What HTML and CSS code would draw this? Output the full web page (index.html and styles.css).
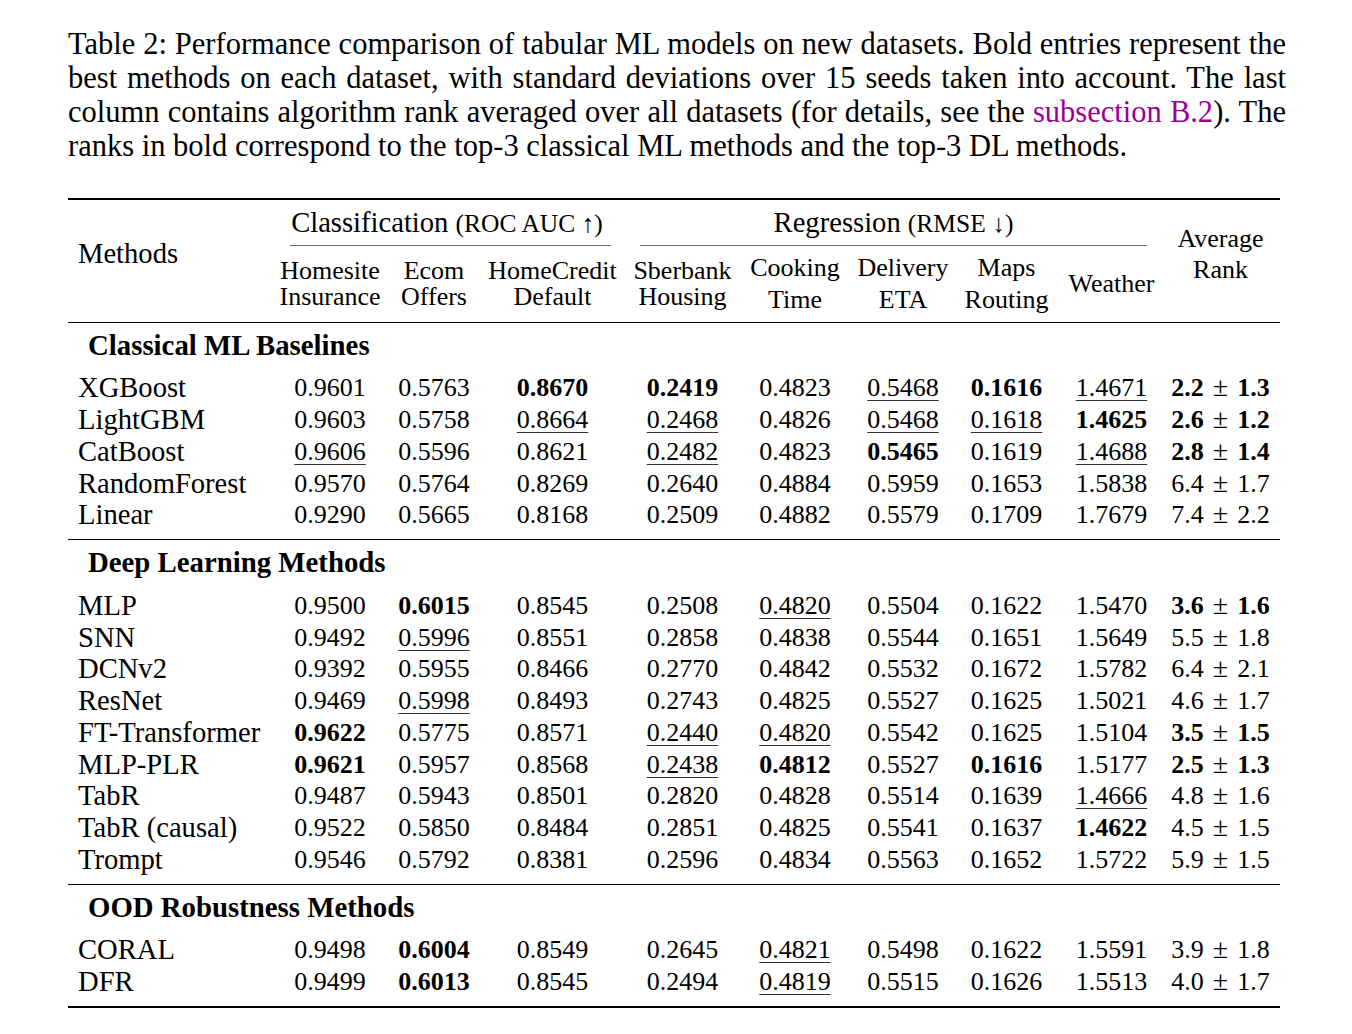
FILE: index.html
```html
<!DOCTYPE html>
<html lang="en">
<head>
<meta charset="utf-8">
<title>Table 2</title>
<link rel="stylesheet" href="styles.css">
</head>
<body>
<div class="page">
  <p class="caption">
    <span class="ln">Table 2: Performance comparison of tabular ML models on new datasets. Bold entries represent the</span>
    <span class="ln">best methods on each dataset, with standard deviations over 15 seeds taken into account. The last</span>
    <span class="ln">column contains algorithm rank averaged over all datasets (for details, see the <span class="link">subsection B.2</span>). The</span>
    <span class="ln last">ranks in bold correspond to the top-3 classical ML methods and the top-3 DL methods.</span>
  </p>
  <table class="results">
    <colgroup>
      <col class="c-m"><col class="c1"><col class="c2"><col class="c3"><col class="c4"><col class="c5"><col class="c6"><col class="c7"><col class="c8"><col class="c9">
    </colgroup>
    <thead>
      <tr class="h1">
        <th rowspan="2" class="methods">Methods</th>
        <th colspan="3" class="grp"><div class="cm cm-cls">Classification <span class="small">(ROC AUC ↑)</span></div></th>
        <th colspan="5" class="grp"><div class="cm cm-reg">Regression <span class="small">(RMSE ↓)</span></div></th>
        <th rowspan="2" class="avg">Average<br>Rank</th>
      </tr>
      <tr class="h2">
        <th class="sub">Homesite<br>Insurance</th>
        <th class="sub k2">Ecom<br>Offers</th>
        <th class="sub">HomeCredit<br>Default</th>
        <th class="sub">Sberbank<br>Housing</th>
        <th class="sub wide k5">Cooking<br>Time</th>
        <th class="sub wide k6">Delivery<br>ETA</th>
        <th class="sub wide">Maps<br>Routing</th>
        <th class="sub">Weather</th>
      </tr>
    </thead>
    <tbody>
      <tr class="sec"><td colspan="10">Classical ML Baselines</td></tr>
      <tr><td>XGBoost</td><td>0.9601</td><td>0.5763</td><td><b>0.8670</b></td><td><b>0.2419</b></td><td>0.4823</td><td><u>0.5468</u></td><td><b>0.1616</b></td><td><u>1.4671</u></td><td><b>2.2</b><span class="pm">±</span><b>1.3</b></td></tr>
      <tr><td>LightGBM</td><td>0.9603</td><td>0.5758</td><td><u>0.8664</u></td><td><u>0.2468</u></td><td>0.4826</td><td><u>0.5468</u></td><td><u>0.1618</u></td><td><b>1.4625</b></td><td><b>2.6</b><span class="pm">±</span><b>1.2</b></td></tr>
      <tr><td>CatBoost</td><td><u>0.9606</u></td><td>0.5596</td><td>0.8621</td><td><u>0.2482</u></td><td>0.4823</td><td><b>0.5465</b></td><td>0.1619</td><td><u>1.4688</u></td><td><b>2.8</b><span class="pm">±</span><b>1.4</b></td></tr>
      <tr><td>RandomForest</td><td>0.9570</td><td>0.5764</td><td>0.8269</td><td>0.2640</td><td>0.4884</td><td>0.5959</td><td>0.1653</td><td>1.5838</td><td>6.4<span class="pm">±</span>1.7</td></tr>
      <tr class="last"><td>Linear</td><td>0.9290</td><td>0.5665</td><td>0.8168</td><td>0.2509</td><td>0.4882</td><td>0.5579</td><td>0.1709</td><td>1.7679</td><td>7.4<span class="pm">±</span>2.2</td></tr>

      <tr class="sec"><td colspan="10">Deep Learning Methods</td></tr>
      <tr><td>MLP</td><td>0.9500</td><td><b>0.6015</b></td><td>0.8545</td><td>0.2508</td><td><u>0.4820</u></td><td>0.5504</td><td>0.1622</td><td>1.5470</td><td><b>3.6</b><span class="pm">±</span><b>1.6</b></td></tr>
      <tr><td>SNN</td><td>0.9492</td><td><u>0.5996</u></td><td>0.8551</td><td>0.2858</td><td>0.4838</td><td>0.5544</td><td>0.1651</td><td>1.5649</td><td>5.5<span class="pm">±</span>1.8</td></tr>
      <tr><td>DCNv2</td><td>0.9392</td><td>0.5955</td><td>0.8466</td><td>0.2770</td><td>0.4842</td><td>0.5532</td><td>0.1672</td><td>1.5782</td><td>6.4<span class="pm">±</span>2.1</td></tr>
      <tr><td>ResNet</td><td>0.9469</td><td><u>0.5998</u></td><td>0.8493</td><td>0.2743</td><td>0.4825</td><td>0.5527</td><td>0.1625</td><td>1.5021</td><td>4.6<span class="pm">±</span>1.7</td></tr>
      <tr><td>FT-Transformer</td><td><b>0.9622</b></td><td>0.5775</td><td>0.8571</td><td><u>0.2440</u></td><td><u>0.4820</u></td><td>0.5542</td><td>0.1625</td><td>1.5104</td><td><b>3.5</b><span class="pm">±</span><b>1.5</b></td></tr>
      <tr><td>MLP-PLR</td><td><b>0.9621</b></td><td>0.5957</td><td>0.8568</td><td><u>0.2438</u></td><td><b>0.4812</b></td><td>0.5527</td><td><b>0.1616</b></td><td>1.5177</td><td><b>2.5</b><span class="pm">±</span><b>1.3</b></td></tr>
      <tr><td>TabR</td><td>0.9487</td><td>0.5943</td><td>0.8501</td><td>0.2820</td><td>0.4828</td><td>0.5514</td><td>0.1639</td><td><u>1.4666</u></td><td>4.8<span class="pm">±</span>1.6</td></tr>
      <tr><td>TabR (causal)</td><td>0.9522</td><td>0.5850</td><td>0.8484</td><td>0.2851</td><td>0.4825</td><td>0.5541</td><td>0.1637</td><td><b>1.4622</b></td><td>4.5<span class="pm">±</span>1.5</td></tr>
      <tr class="last"><td>Trompt</td><td>0.9546</td><td>0.5792</td><td>0.8381</td><td>0.2596</td><td>0.4834</td><td>0.5563</td><td>0.1652</td><td>1.5722</td><td>5.9<span class="pm">±</span>1.5</td></tr>

      <tr class="sec"><td colspan="10">OOD Robustness Methods</td></tr>
      <tr><td>CORAL</td><td>0.9498</td><td><b>0.6004</b></td><td>0.8549</td><td>0.2645</td><td><u>0.4821</u></td><td>0.5498</td><td>0.1622</td><td>1.5591</td><td>3.9<span class="pm">±</span>1.8</td></tr>
      <tr class="last end"><td>DFR</td><td>0.9499</td><td><b>0.6013</b></td><td>0.8545</td><td>0.2494</td><td><u>0.4819</u></td><td>0.5515</td><td>0.1626</td><td>1.5513</td><td>4.0<span class="pm">±</span>1.7</td></tr>
    </tbody>
  </table>
</div>
</body>
</html>
```

FILE: styles.css
```css
html, body {
  margin: 0;
  padding: 0;
  background: #fff;
  color: #000;
  font-family: "Liberation Serif", "Times New Roman", serif;
}

.page {
  padding: 27px 0 0 68px;
  width: 1218px;
}

.caption {
  margin: 0 0 35px;
  font-size: 30.5px;
  line-height: 34px;
}

.caption .ln {
  display: block;
  white-space: nowrap;
  text-align: justify;
  text-align-last: justify;
}

.caption .ln.last {
  text-align-last: left;
}

.link {
  color: #990099;
}

.results {
  width: 1212px;
  table-layout: fixed;
  border-collapse: separate;
  border-spacing: 0;
  font-size: 26px;
  line-height: 31.75px;
}

.c-m { width: 210px; }
.c1 { width: 104px; }
.c2 { width: 106px; }
.c3 { width: 129px; }
.c4 { width: 131px; }
.c5 { width: 97px; }
.c6 { width: 110px; }
.c7 { width: 103px; }
.c8 { width: 107px; }
.c9 { width: 115px; }

.results th,
.results td {
  padding: 0;
  font-weight: normal;
  text-align: center;
  vertical-align: middle;
  white-space: nowrap;
}

/* fine column centring */
.results tbody td:nth-child(3),
.results .k2 { padding-right: 2px; }
.results tbody td:nth-child(6),
.results .k5 { padding-right: 3px; }
.results tbody td:nth-child(7),
.results .k6 { padding-left: 6px; }
.results tbody td:nth-child(10) { padding-right: 4px; }

.results .h1 th {
  border-top: 2.4px solid #000;
}

.results .methods {
  text-align: left;
  padding: 0 0 14px 10px;
  font-size: 28.6px;
}

.results .avg {
  line-height: 31px;
  padding: 0 4px 14px 0;
}

.results .grp {
  padding: 0;
}

.cm {
  height: 45px;
  line-height: 45px;
  border-bottom: 1.5px solid #666;
  font-size: 28.6px;
}

.cm-cls { margin: 0 6px 0 12px; padding-right: 7px; }
.cm-reg { margin: 0 18px 0 23px; }

.small {
  font-size: 25.5px;
}

.results .sub {
  height: 75.5px;
  line-height: 26px;
}

.results .sub.wide {
  line-height: 32px;
}

.results .sec td {
  border-top: 1.3px solid #000;
  padding: 7px 0 11px 20px;
  text-align: left;
  font-weight: bold;
  font-size: 28.8px;
}

.results td:first-child {
  text-align: left;
  padding-left: 10px;
  font-size: 28.6px;
}

.results .sec td:first-child {
  padding-left: 20px;
  font-size: 28.8px;
}

.results .last td {
  padding-bottom: 8px;
}

.results .end td {
  border-bottom: 2.4px solid #000;
}

.results b {
  font-weight: bold;
}

.results u {
  text-decoration: underline;
  text-decoration-thickness: 1.3px;
  text-underline-offset: 4px;
  text-decoration-color: #333;
}

.pm {
  margin: 0 9px;
  font-size: 28px;
  line-height: 0;
}
```
